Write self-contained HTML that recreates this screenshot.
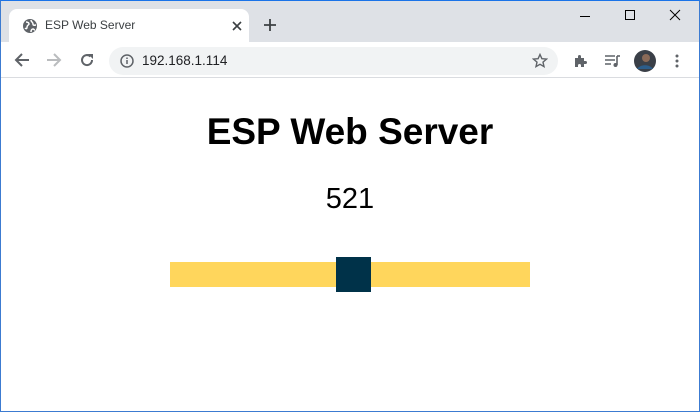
<!DOCTYPE html>
<html><head><style>
*{margin:0;padding:0;box-sizing:border-box}
body{width:700px;height:412px;overflow:hidden;font-family:"Liberation Sans",Arial,sans-serif;background:#fff;position:relative}
.frame{position:absolute;inset:0;border:1px solid #3c7bd1;border-top-color:#1a73e8;pointer-events:none;z-index:9}
.titlebar{position:absolute;left:0;top:0;width:700px;height:42px;background:#dee1e6}
.tab{position:absolute;left:9px;top:9px;width:240px;height:33px;background:#fff;border-radius:8px 8px 0 0}
.tab .t{position:absolute;left:36px;top:9px;font-size:12px;color:#3c4043}
.toolbar{position:absolute;left:0;top:42px;width:700px;height:36px;background:#fff;border-bottom:1px solid #dadce0}
.omni{position:absolute;left:109px;top:5px;width:449px;height:28px;background:#f1f3f4;border-radius:14px}
.omni .u{position:absolute;left:33px;top:6px;font-size:13.5px;color:#202124}
h1{position:absolute;top:111px;left:0;width:700px;text-align:center;font-size:37px;font-weight:bold;color:#000}
.val{position:absolute;top:183px;left:0;width:700px;text-align:center;font-size:29px;color:#000}
.track{position:absolute;left:170px;top:262px;width:360px;height:25px;background:#ffd65c}
.thumb{position:absolute;left:336px;top:257px;width:35px;height:35px;background:#003249}
svg{position:absolute}
</style></head><body>
<div class="titlebar">
<div class="tab">
<svg style="left:13px;top:9px" width="16" height="16" viewBox="0 0 16 16"><circle cx="8" cy="8" r="7" fill="#5f6368"/><path d="M4 4c2 0 3 1 3 2s-2 1-2 3-1 2-2 1M9 2c0 2 2 2 2 4s2 1 3 1M9 14c0-2 1-3 2-3s1 1 2 1" stroke="#fff" stroke-width="1.5" fill="none"/></svg>
<div class="t">ESP Web Server</div>
<svg style="left:223px;top:12px" width="10" height="10" viewBox="0 0 10 10"><path d="M1 1L9 9M9 1L1 9" stroke="#3c4043" stroke-width="1.6"/></svg>
</div>
<svg style="left:264px;top:19px" width="12" height="12" viewBox="0 0 12 12"><path d="M6 0V12M0 6H12" stroke="#3c4043" stroke-width="1.8"/></svg>
<svg style="left:579px;top:10px" width="12" height="12"><path d="M1 6.5H11" stroke="#000"/></svg>
<svg style="left:624px;top:9px" width="12" height="12"><rect x="1.5" y="1.5" width="9" height="9" fill="none" stroke="#000"/></svg>
<svg style="left:669px;top:9px" width="12" height="12"><path d="M1 1L11 11M11 1L1 11" stroke="#000"/></svg>
</div>
<div class="toolbar">
<svg style="left:14px;top:10px" width="16" height="16" viewBox="0 0 16 16"><path d="M15 8H2M8 2L2 8l6 6" stroke="#5f6368" stroke-width="2" fill="none"/></svg>
<svg style="left:46px;top:10px" width="16" height="16" viewBox="0 0 16 16"><path d="M1 8H14M8 2l6 6-6 6" stroke="#babcbe" stroke-width="2" fill="none"/></svg>
<svg style="left:79px;top:10px" width="16" height="16" viewBox="0 0 16 16"><path d="M13 8A5 5 0 1 1 11.5 4.5" stroke="#5f6368" stroke-width="2" fill="none"/><path d="M9 2h5v5z" fill="#5f6368"/></svg>
<div class="omni">
<svg style="left:11px;top:7px" width="14" height="14" viewBox="0 0 14 14"><circle cx="7" cy="7" r="6" fill="none" stroke="#5f6368" stroke-width="1.5"/><path d="M7 6v4M7 3.5v1.5" stroke="#5f6368" stroke-width="1.5"/></svg>
<div class="u">192.168.1.114</div>
<svg style="left:423px;top:6px" width="16" height="16" viewBox="0 0 16 16"><path d="M8 1.5l1.9 4.2 4.6.4-3.5 3 1 4.5L8 11.3 4 13.6l1-4.5-3.5-3 4.6-.4z" fill="none" stroke="#5f6368" stroke-width="1.4"/></svg>
</div>
<svg style="left:573px;top:11px" width="16" height="16" viewBox="0 0 16 16"><path d="M2 5h3V3.5a1.5 1.5 0 0 1 3 0V5h3v3h1.5a1.5 1.5 0 0 1 0 3H11v3H8v-1.5a1.5 1.5 0 0 0-3 0V14H2z" fill="#5f6368"/></svg>
<svg style="left:604px;top:11px" width="18" height="16" viewBox="0 0 18 16"><path d="M1 3h10M1 7h10M1 11h6" stroke="#5f6368" stroke-width="1.6"/><path d="M13 3v9" stroke="#5f6368" stroke-width="1.6"/><circle cx="11.5" cy="12" r="2" fill="#5f6368"/><path d="M13 3h3" stroke="#5f6368" stroke-width="1.6"/></svg>
<svg style="left:634px;top:8px" width="22" height="22" viewBox="0 0 22 22"><circle cx="11" cy="11" r="11" fill="#3a3f47"/><circle cx="12" cy="8" r="4" fill="#8a6a58"/><path d="M3 19c3-5 13-5 16 0" fill="#2c5d8a"/></svg>
<svg style="left:675px;top:11px" width="4" height="16" viewBox="0 0 4 16"><circle cx="2" cy="3" r="1.5" fill="#5f6368"/><circle cx="2" cy="8" r="1.5" fill="#5f6368"/><circle cx="2" cy="13" r="1.5" fill="#5f6368"/></svg>
</div>
<h1>ESP Web Server</h1>
<div class="val">521</div>
<div class="track"></div>
<div class="thumb"></div>
<div class="frame"></div>
</body></html>
